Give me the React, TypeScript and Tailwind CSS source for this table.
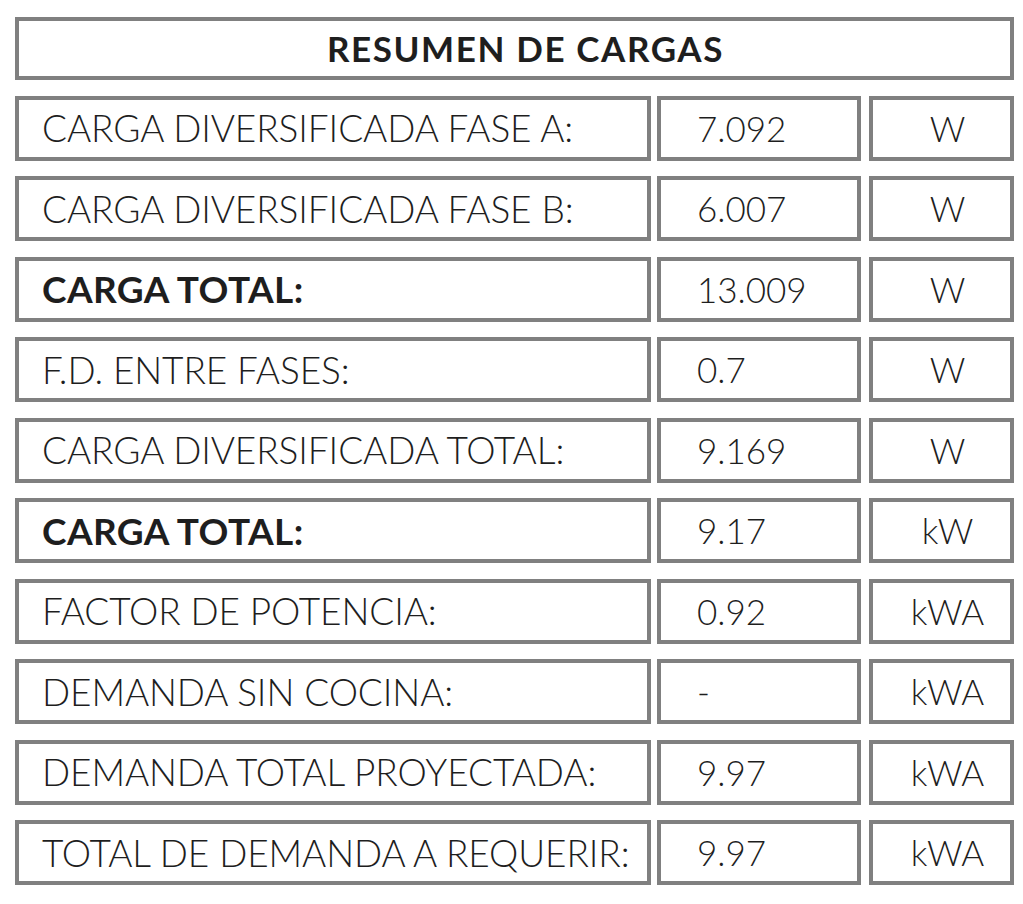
import React from "react";

const rows: { label: string; value: string; unit: string; bold?: boolean }[] = [
  { label: "CARGA DIVERSIFICADA FASE A:", value: "7.092", unit: "W" },
  { label: "CARGA DIVERSIFICADA FASE B:", value: "6.007", unit: "W" },
  { label: "CARGA TOTAL:", value: "13.009", unit: "W", bold: true },
  { label: "F.D. ENTRE FASES:", value: "0.7", unit: "W" },
  { label: "CARGA DIVERSIFICADA TOTAL:", value: "9.169", unit: "W" },
  { label: "CARGA TOTAL:", value: "9.17", unit: "kW", bold: true },
  { label: "FACTOR DE POTENCIA:", value: "0.92", unit: "kWA" },
  { label: "DEMANDA SIN COCINA:", value: "-", unit: "kWA" },
  { label: "DEMANDA TOTAL PROYECTADA:", value: "9.97", unit: "kWA" },
  { label: "TOTAL DE DEMANDA A REQUERIR:", value: "9.97", unit: "kWA" },
];

export default function App() {
  return (
    <div
      className="w-[1023px] h-[904px] bg-white text-[#1e1e1e] pt-[17px] pl-[15px]"
      style={{ fontFamily: "Lato, 'Liberation Sans', sans-serif" }}
    >
      <div className="w-[999px] flex flex-col gap-[15.5px]">
        <div className="h-[63px] border-4 border-[#808080] flex items-center justify-center pl-[22px] text-[35px] font-bold tracking-[1.6px]">
          RESUMEN DE CARGAS
        </div>
        {rows.map((r, i) => (
          <div key={i} className="flex h-[65px]">
            <div
              className={`w-[636px] border-4 border-[#808080] flex items-center pl-[23px] text-[37px] ${
                r.bold ? "font-bold tracking-[0.4px]" : "font-light tracking-[-0.1px]"
              }`}
            >
              {r.label}
            </div>
            <div className="ml-[6px] w-[204px] border-4 border-[#808080] flex items-center pl-[36px] text-[35px] font-light">
              {r.value}
            </div>
            <div className="ml-[8px] w-[145px] border-4 border-[#808080] flex items-center justify-center pl-3 text-[35px] font-light">
              {r.unit}
            </div>
          </div>
        ))}
      </div>
    </div>
  );
}
